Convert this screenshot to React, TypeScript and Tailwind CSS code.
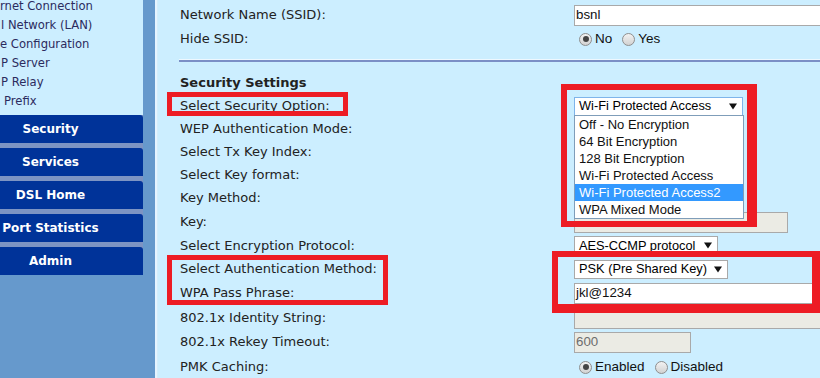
import React from 'react';

interface Row {
    label: string;
    h: string;
    bold?: boolean;
    control?: React.ReactNode;
}

const Arrow = () => (
    <svg width="8" height="7" viewBox="0 0 8 7" className="shrink-0">
        <path d="M0 0.5H8L4 6.5Z" fill="#111" />
    </svg>
);

const SelectBox = ({ value, w, focused }: { value: string; w: string; focused?: boolean }) => (
    <div
        className={`flex h-[19px] items-center justify-between gap-[4px] bg-white pl-[4px] pr-[5px] border text-[12.8px] ${w} ${
            focused ? 'border-[#7eb4ea]' : 'border-[#a9a9a9]'
        }`}
    >
        <span className="whitespace-nowrap">{value}</span>
        <Arrow />
    </div>
);

const TextBox = ({ value, w, disabled }: { value?: string; w: string; disabled?: boolean }) => (
    <div
        className={`flex h-[21px] shrink-0 items-center border border-[#a9a9a9] pl-[1px] ${w} ${
            disabled ? 'bg-[#ebebe4] text-[#6d6d6d]' : 'bg-white text-[#111]'
        }`}
    >
        {value}
    </div>
);

const Radio = ({ checked }: { checked?: boolean }) => (
    <span className="flex h-[13px] w-[13px] shrink-0 items-center justify-center rounded-full border border-[#8e8e8e] bg-linear-to-b from-[#f2f2f2] to-[#d2d2d2]">
        {checked && <span className="h-[6px] w-[6px] rounded-full bg-[#444]" />}
    </span>
);

const RadioPair = ({ a, b, gap }: { a: string; b: string; gap: string }) => (
    <div className="flex items-center pl-[5px] text-[13.5px] text-[#111]">
        <Radio checked />
        <span className="ml-[3px]">{a}</span>
        <span className={gap}>
            <Radio />
        </span>
        <span className="ml-[3px]">{b}</span>
    </div>
);

const App = () => {
    const links = ['rnet Connection', 'l Network (LAN)', 'e Configuration', 'P Server', 'P Relay', 'Prefix'];
    const linkPad = ['pl-0', 'pl-[1px]', 'pl-0', 'pl-[1px]', 'pl-[1px]', 'pl-[4px]'];
    const menu = ['Security', 'Services', 'DSL Home', 'Port Statistics', 'Admin'];
    const options = [
        'Off - No Encryption',
        '64 Bit Encryption',
        '128 Bit Encryption',
        'Wi-Fi Protected Access',
        'Wi-Fi Protected Access2',
        'WPA Mixed Mode'
    ];

    const top: Row[] = [
        { label: 'Network Name (SSID):', h: 'h-[24px]', control: <TextBox value="bsnl" w="w-[260px]" /> },
        { label: 'Hide SSID:', h: 'h-[24px]', control: <RadioPair a="No" b="Yes" gap="ml-[10px]" /> }
    ];

    const rows: Row[] = [
        { label: 'Security Settings', h: 'h-[24px]', bold: true },
        {
            label: 'Select Security Option:',
            h: 'h-[22px]',
            control: <SelectBox value="Wi-Fi Protected Access" w="w-[169px]" focused />
        },
        { label: 'WEP Authentication Mode:', h: 'h-[24px]' },
        { label: 'Select Tx Key Index:', h: 'h-[22px]' },
        { label: 'Select Key format:', h: 'h-[23px]' },
        { label: 'Key Method:', h: 'h-[24px]' },
        { label: 'Key:', h: 'h-[24px]', control: <TextBox w="w-[214px]" disabled /> },
        {
            label: 'Select Encryption Protocol:',
            h: 'h-[23px]',
            control: <SelectBox value="AES-CCMP protocol" w="w-[144px]" />
        },
        {
            label: 'Select Authentication Method:',
            h: 'h-[24px]',
            control: <SelectBox value="PSK (Pre Shared Key)" w="w-[154px]" />
        },
        { label: 'WPA Pass Phrase:', h: 'h-[24px]', control: <TextBox value="jkl@1234" w="w-[260px]" /> },
        { label: '802.1x Identity String:', h: 'h-[26px]', control: <TextBox w="w-[260px]" disabled /> },
        { label: '802.1x Rekey Timeout:', h: 'h-[22px]', control: <TextBox value="600" w="w-[117px]" disabled /> },
        {
            label: 'PMK Caching:',
            h: 'h-[28px]',
            control: <RadioPair a="Enabled" b="Disabled" gap="ml-[10px]" />
        }
    ];

    const renderRow = (row: Row) => (
        <div key={row.label} className={`grid grid-cols-[416px_1fr] items-center ${row.h}`}>
            <div className={`pl-[22px] text-[13px] text-[#222] whitespace-nowrap ${row.bold ? 'font-bold text-[12.5px]' : ''}`}>
                {row.label}
            </div>
            <div className="flex items-center overflow-hidden font-['Liberation_Sans',Arial,sans-serif] text-[13.3px]">
                {row.control}
            </div>
        </div>
    );

    return (
        <div className="relative flex h-[378px] w-[820px] overflow-hidden bg-[#cceeff] font-['DejaVu_Sans',Verdana,sans-serif]">
            {/* left navigation */}
            <aside className="flex w-[143px] shrink-0 flex-col bg-[#6699cc]">
                <div className="h-[115px] overflow-hidden bg-[#cceeff] text-[11.6px] text-[#2b2b5e]">
                    <div className="-mt-[3px] flex flex-col">
                        {links.map((l, i) => (
                            <div key={l} className={`h-[19px] leading-[19px] whitespace-nowrap ${linkPad[i]}`}>
                                {l}
                            </div>
                        ))}
                    </div>
                </div>
                <div className="flex flex-col gap-[5px] bg-[#7d94c3]">
                    {menu.map(m => (
                        <div key={m} className="flex h-[28px] items-center rounded-tr-[3px] bg-[#003399]">
                            <span className="w-[101px] text-center text-[12px] font-bold whitespace-nowrap text-white">
                                {m}
                            </span>
                        </div>
                    ))}
                </div>
            </aside>
            <div className="w-[12px] shrink-0 bg-[#6699cc]" />
            <div className="w-[2px] shrink-0 bg-[#e6f4ff]" />
            <div className="w-px shrink-0 bg-[#d4eefc]" />

            {/* main settings panel */}
            <main className="relative flex-1 pt-[3px]">
                {top.map(renderRow)}
                <div className="h-[20px] pt-[8px] pl-[21px]">
                    <div className="h-px bg-[#eef8ff]" />
                    <div className="h-[2px] bg-[#7b8fc6]" />
                </div>
                {rows.map(renderRow)}

                {/* open dropdown list */}
                <div className="absolute left-[416px] top-[115px] w-[170px] border border-[#7f9db9] bg-white font-['Liberation_Sans',Arial,sans-serif] text-[13px] text-[#111]">
                    {options.map(o => (
                        <div
                            key={o}
                            className={`h-[17px] pl-[4px] leading-[17px] whitespace-nowrap ${
                                o === 'Wi-Fi Protected Access2' ? 'bg-[#3399ff] text-white' : ''
                            }`}
                        >
                            {o}
                        </div>
                    ))}
                </div>
            </main>

            {/* annotation boxes */}
            <div className="pointer-events-none absolute left-[167px] top-[92px] h-[24px] w-[181px] border-[5px] border-[#ed1c24]" />
            <div className="pointer-events-none absolute left-[561px] top-[84px] h-[143px] w-[196px] border-[6px] border-r-[10px] border-[#ed1c24]" />
            <div className="pointer-events-none absolute left-[167px] top-[255px] h-[50px] w-[221px] border-[5px] border-[#ed1c24]" />
            <div className="pointer-events-none absolute left-[552px] top-[251px] h-[62px] w-[268px] border-[6px] border-r-[8px] border-b-[9px] border-[#ed1c24]" />
        </div>
    );
};

export default App;
